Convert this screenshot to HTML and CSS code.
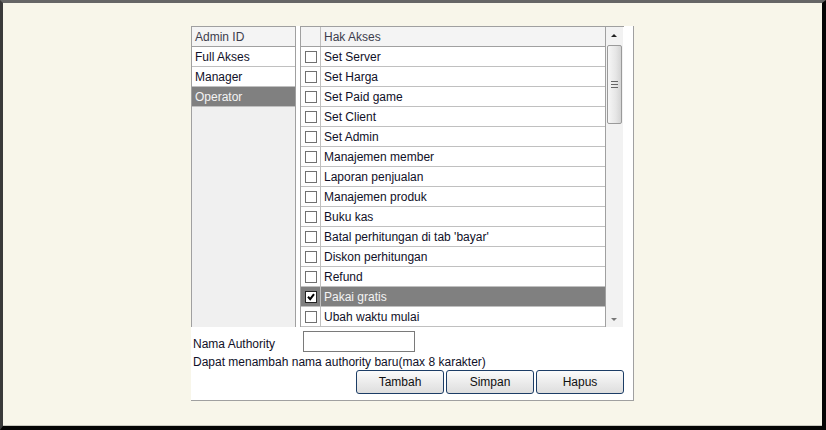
FILE: index.html
```html
<!DOCTYPE html>
<html>
<head>
<meta charset="utf-8">
<link rel="stylesheet" href="styles.css">
</head>
<body>
<div class="frame">
  <div class="panel">
    <div class="tables">
      <div class="admin">
        <div class="row head">Admin ID</div>
        <div class="row">Full Akses</div>
        <div class="row">Manager</div>
        <div class="row sel">Operator</div>
      </div>
      <div class="akses">
        <div class="grid">
          <div class="arow head"><span class="cb-cell"></span><span class="label">Hak Akses</span></div>
          <div class="arow"><span class="cb-cell"><i class="cb"></i></span><span class="label">Set Server</span></div>
          <div class="arow"><span class="cb-cell"><i class="cb"></i></span><span class="label">Set Harga</span></div>
          <div class="arow"><span class="cb-cell"><i class="cb"></i></span><span class="label">Set Paid game</span></div>
          <div class="arow"><span class="cb-cell"><i class="cb"></i></span><span class="label">Set Client</span></div>
          <div class="arow"><span class="cb-cell"><i class="cb"></i></span><span class="label">Set Admin</span></div>
          <div class="arow"><span class="cb-cell"><i class="cb"></i></span><span class="label">Manajemen member</span></div>
          <div class="arow"><span class="cb-cell"><i class="cb"></i></span><span class="label">Laporan penjualan</span></div>
          <div class="arow"><span class="cb-cell"><i class="cb"></i></span><span class="label">Manajemen produk</span></div>
          <div class="arow"><span class="cb-cell"><i class="cb"></i></span><span class="label">Buku kas</span></div>
          <div class="arow"><span class="cb-cell"><i class="cb"></i></span><span class="label">Batal perhitungan di tab 'bayar'</span></div>
          <div class="arow"><span class="cb-cell"><i class="cb"></i></span><span class="label">Diskon perhitungan</span></div>
          <div class="arow"><span class="cb-cell"><i class="cb"></i></span><span class="label">Refund</span></div>
          <div class="arow sel"><span class="cb-cell"><i class="cb on"><svg width="8" height="8" viewBox="0 0 8 8"><path d="M1 3.8 L3.2 6.2 L7 1.2" fill="none" stroke="#000" stroke-width="2"/></svg></i></span><span class="label">Pakai gratis</span></div>
          <div class="arow"><span class="cb-cell"><i class="cb"></i></span><span class="label">Ubah waktu mulai</span></div>
        </div>
        <div class="scrollbar">
          <div class="arrow up"></div>
          <div class="thumb"><span class="grip"></span><span class="grip"></span><span class="grip"></span></div>
          <div class="track"></div>
          <div class="arrow down"></div>
        </div>
      </div>
    </div>
    <div class="name-row">
      <span class="name-label">Nama Authority</span>
      <span class="input"></span>
    </div>
    <div class="hint">Dapat menambah nama authority baru(max 8 karakter)</div>
    <div class="buttons">
      <button class="btn">Tambah</button>
      <button class="btn">Simpan</button>
      <button class="btn">Hapus</button>
    </div>
  </div>
</div>
</body>
</html>
```
FILE: styles.css
```css
html, body {
  margin: 0;
  padding: 0;
}
body {
  width: 826px;
  height: 430px;
  overflow: hidden;
  font-family: "Liberation Sans", Arial, sans-serif;
  font-size: 12px;
  color: #101028;
}
.frame {
  box-sizing: border-box;
  width: 826px;
  height: 430px;
  background: #f8f6ea;
  border-top: 3px solid #666;
  border-left: 3px solid #3a3a3a;
  border-right: 4px solid #050505;
  border-bottom: 4px solid #050505;
  box-shadow: inset 0 -1px 0 #c9c8bf;
  padding: 23px 0 0 188px;
}
.panel {
  box-sizing: border-box;
  width: 443px;
  height: 375px;
  background: #fff;
  border-right: 1px solid #a0a0a0;
  border-bottom: 1px solid #a0a0a0;
  display: flex;
  flex-direction: column;
}
.tables {
  display: flex;
  gap: 4px;
  height: 301px;
}
.admin {
  box-sizing: border-box;
  width: 105px;
  height: 301px;
  border: 1px solid #a0a0a0;
  border-bottom: none;
  background: #f0f0f0;
}
.row {
  box-sizing: border-box;
  height: 20px;
  line-height: 21px;
  border-bottom: 1px solid #c0c0c0;
  padding-left: 3px;
  background: #fff;
  white-space: nowrap;
  overflow: hidden;
}
.row.head, .arow.head {
  background: #f4f4f4;
  color: #3c3c4c;
  border-bottom-color: #a0a0a0;
}
.row.sel {
  background: #808080;
  color: #f4f4f4;
  border-bottom-color: #c0c0c0;
}
.akses {
  box-sizing: border-box;
  width: 324px;
  height: 301px;
  border-top: 1px solid #a0a0a0;
  border-left: 1px solid #a0a0a0;
  display: flex;
}
.grid {
  width: 304px;
  border-right: 1px solid #a0a0a0;
}
.arow {
  box-sizing: border-box;
  height: 20px;
  border-bottom: 1px solid #c0c0c0;
  display: flex;
  background: #fff;
}
.arow.sel {
  background: #808080;
  color: #f4f4f4;
}
.cb-cell {
  box-sizing: border-box;
  width: 20px;
  height: 19px;
  border-right: 1px solid #c0c0c0;
  display: flex;
  align-items: center;
  justify-content: center;
}
.cb {
  box-sizing: border-box;
  width: 12px;
  height: 12px;
  border: 1px solid #707070;
  background: #fff;
  display: flex;
  align-items: center;
  justify-content: center;
}
.cb.on {
  border-color: #222;
}
.label {
  line-height: 21px;
  height: 19px;
  padding-left: 3px;
  white-space: nowrap;
}
.scrollbar {
  width: 17px;
  background: #f2f2f2;
  display: flex;
  flex-direction: column;
  align-items: center;
}
.arrow {
  height: 18px;
  width: 17px;
  position: relative;
}
.arrow.up::after, .arrow.down::after {
  content: "";
  position: absolute;
  left: 5px;
  width: 0;
  height: 0;
  border-left: 3px solid transparent;
  border-right: 3px solid transparent;
}
.arrow.up::after {
  top: 7px;
  border-bottom: 3px solid #222;
}
.arrow.down::after {
  top: 9px;
  border-top: 3px solid #777;
}
.thumb {
  box-sizing: border-box;
  width: 15px;
  height: 79px;
  border: 1px solid #9a9a9a;
  border-radius: 2px;
  background: linear-gradient(to right, #f6f6f6, #e6e6e6 60%, #d4d4d4);
  display: flex;
  flex-direction: column;
  align-items: center;
  justify-content: center;
  gap: 2px;
}
.grip {
  display: block;
  width: 7px;
  height: 1px;
  background: #666;
}
.track {
  flex: 1;
}
.name-row {
  display: flex;
  align-items: center;
  margin-top: 4px;
  padding-left: 2px;
  height: 21px;
}
.name-label {
  width: 110px;
  padding-top: 4px;
}
.input {
  box-sizing: border-box;
  width: 112px;
  height: 21px;
  border: 1px solid #7a7a7a;
  background: #fff;
}
.hint {
  padding-left: 2px;
  line-height: 15px;
  margin-top: 3px;
}
.buttons {
  display: flex;
  justify-content: flex-end;
  gap: 2px;
  padding-right: 9px;
  margin-top: 0;
}
.btn {
  box-sizing: border-box;
  width: 88px;
  height: 24px;
  border: 1px solid #1c3d66;
  border-radius: 3px;
  background: linear-gradient(to bottom, #fbfbfb, #ececec 50%, #dedede);
  font-family: "Liberation Sans", Arial, sans-serif;
  font-size: 12px;
  color: #101010;
  padding: 0;
}
```
